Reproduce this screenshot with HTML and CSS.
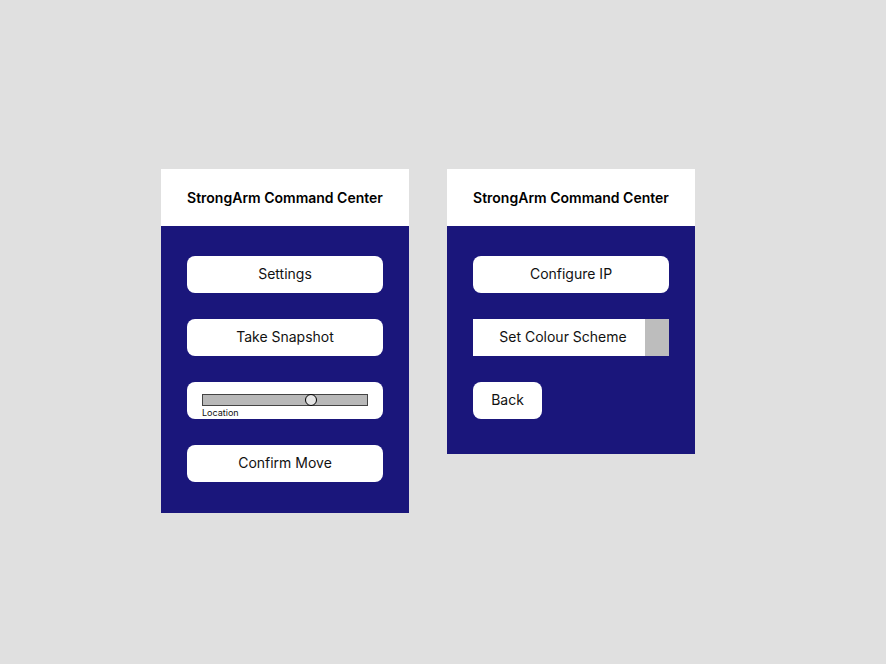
FILE: index.html
```html
<!DOCTYPE html>
<html>
<head>
<meta charset="utf-8">
<link rel="stylesheet" href="styles.css">
</head>
<body>
<div class="stage">
  <div class="panel">
    <div class="header">StrongArm Command Center</div>
    <div class="body body-main">
      <div class="btn">Settings</div>
      <div class="btn">Take Snapshot</div>
      <div class="btn slider-btn">
        <div class="track"><div class="thumb"></div></div>
        <div class="slider-label">Location</div>
      </div>
      <div class="btn">Confirm Move</div>
    </div>
  </div>
  <div class="panel">
    <div class="header">StrongArm Command Center</div>
    <div class="body body-settings">
      <div class="btn">Configure IP</div>
      <div class="btn select"><span class="select-text">Set Colour Scheme</span><span class="select-side"></span></div>
      <div class="btn back">Back</div>
    </div>
  </div>
</div>
</body>
</html>
```
FILE: styles.css
```css
html, body {
  margin: 0;
  padding: 0;
  background: #e0e0e0;
  font-family: Inter, "Noto Sans", sans-serif;
}
.stage {
  display: flex;
  align-items: flex-start;
  gap: 38px;
  padding: 169px 0 0 161px;
}
.panel {
  width: 248px;
  display: flex;
  flex-direction: column;
}
.header {
  height: 57px;
  background: #ffffff;
  display: flex;
  align-items: center;
  justify-content: center;
  font-weight: 600;
  font-size: 14px;
  color: #000;
  box-sizing: border-box;
}
.body {
  background: #1a167b;
  display: flex;
  flex-direction: column;
  align-items: flex-start;
  gap: 26px;
  padding: 30px 26px 31px;
}
.body-settings {
  padding-bottom: 35px;
}
.btn {
  width: 196px;
  height: 37px;
  background: #fff;
  border-radius: 8px;
  display: flex;
  align-items: center;
  justify-content: center;
  font-size: 14px;
  color: #111;
  box-sizing: border-box;
  padding-bottom: 2px;
}
.slider-btn {
  flex-direction: column;
  align-items: flex-start;
  justify-content: flex-start;
  padding: 12px 15px 0;
}
.track {
  position: relative;
  width: 166px;
  height: 12px;
  background: #b8b8b8;
  border: 1px solid #444;
  box-sizing: border-box;
}
.thumb {
  position: absolute;
  left: 102px;
  top: -1px;
  width: 12px;
  height: 12px;
  border-radius: 50%;
  background: #e4e4e4;
  border: 1px solid #000;
  box-sizing: border-box;
}
.slider-label {
  font-size: 9px;
  line-height: 11px;
  color: #111;
  margin-top: 1px;
}
.select {
  border-radius: 0;
  justify-content: flex-start;
  padding-bottom: 0;
}
.select-text {
  flex: none;
  box-sizing: border-box;
  width: 172px;
  text-align: center;
  padding-left: 8px;
  padding-bottom: 2px;
}
.select-side {
  flex: none;
  width: 24px;
  height: 37px;
  background: #bdbdbd;
}
.back {
  width: 69px;
}
```
